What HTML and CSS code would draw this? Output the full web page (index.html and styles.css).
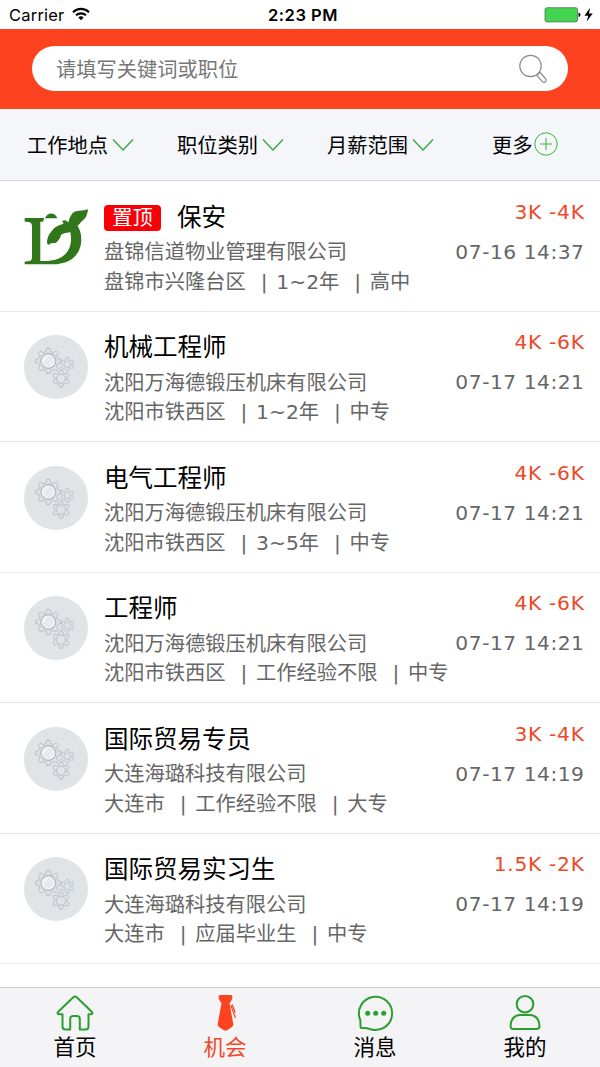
FILE: index.html
```html
<!DOCTYPE html>
<html lang="zh-CN">
<head>
<meta charset="utf-8">
<title>机会</title>
<link rel="stylesheet" href="styles.css">
</head>
<body>
<svg class="defs" aria-hidden="true">
  <symbol id="gears" viewBox="0 0 64 64">
    <g fill="none" stroke="#b4b9c0" stroke-width=".9" stroke-linejoin="round">
      <g transform="translate(24.300 26)">
        <path d="M-2.200-9.600-1.600-12.600H1.600L2.200-9.600 5.200-8.300 7.800-10 10-7.800 8.300-5.200 9.600-2.200 12.600-1.600V1.600L9.600 2.200 8.300 5.200 10 7.800 7.800 10 5.200 8.300 2.200 9.600 1.600 12.600H-1.600L-2.200 9.600-5.200 8.300-7.800 10-10 7.800-8.300 5.200-9.600 2.200-12.600 1.600V-1.600L-9.600-2.200-8.300-5.200-10-7.800-7.800-10-5.200-8.300z"/>
        <circle r="7.500" fill="#f0f2f3" stroke-width="1.300"/>
        <path d="M-5 2.500 2-5M-3.500 4.500 4.500-4M-.5 5.200 5.200-.8" stroke="#d0d4d8"/>
      </g>
      <g transform="translate(43.300 29.300) scale(.8)">
        <path d="M-1.900-6-1.300-8.600H1.300L1.900-6 4.250-4.650 6.800-5.400 8.100-3.200 6.150-1.350V1.350L8.100 3.200 6.800 5.400 4.250 4.650 1.900 6 1.300 8.600H-1.300L-1.900 6-4.250 4.650-6.800 5.400-8.100 3.200-6.150 1.350V-1.350L-8.100-3.200-6.800-5.400-4.250-4.650z"/>
        <circle r="4.200"/>
      </g>
      <g transform="translate(37 43.700)">
        <path d="M-1.900-6-1.300-8.600H1.300L1.900-6 4.250-4.650 6.800-5.400 8.100-3.200 6.150-1.350V1.350L8.100 3.200 6.800 5.400 4.250 4.650 1.900 6 1.300 8.600H-1.300L-1.900 6-4.250 4.650-6.800 5.400-8.100 3.200-6.150 1.350V-1.350L-8.100-3.200-6.800-5.400-4.250-4.650z"/>
        <circle r="4.600"/>
      </g>
    </g>
  </symbol>
  <symbol id="chevron" viewBox="0 0 22 14">
    <path d="m1 1.500 10 10.500L21 1.500" fill="none" stroke="#30a83c" stroke-width="1.300"/>
  </symbol>
</svg>

<div class="app">
  <div class="status">
    <div class="carrier">Carrier
      <svg class="wifi" viewBox="0 0 18 14"><g fill="none" stroke="#000" stroke-width="2.200"><path d="M1 5.200a11.500 11.500 0 0 1 16 0"/><path d="M4 8.300a7.200 7.200 0 0 1 10 0"/></g><path d="M6.300 10.500a3.900 3.900 0 0 1 5.400 0L9 13.300z"/></svg>
    </div>
    <div class="clock">2:23 PM</div>
    <div class="power">
      <svg viewBox="0 0 50 16"><rect x="1" y=".7" width="32.500" height="14.200" rx="2" fill="#43d551" stroke="#58705a" stroke-width=".8"/><path d="M34.500 5.500q2 .3 2 2.300t-2 2.300z"/><path d="M46 .8 40.500 8.700h3.700l-1.500 5.800 6-8H45z"/></svg>
    </div>
  </div>

  <header class="header">
    <div class="search">
      <span>请填写关键词或职位</span>
      <svg viewBox="0 0 30 30"><g fill="none" stroke="#8a8a8a" stroke-width="1.200"><circle cx="12.500" cy="12" r="10.700"/><path d="M18.800 21.300 22 18.300l5.800 6.700c1.500 1.800-1.500 4.500-3.300 2.900z"/></g></svg>
    </div>
  </header>

  <nav class="filters">
    <div class="filter">工作地点<svg class="chev"><use href="#chevron"/></svg></div>
    <div class="filter">职位类别<svg class="chev"><use href="#chevron"/></svg></div>
    <div class="filter">月薪范围<svg class="chev"><use href="#chevron"/></svg></div>
    <div class="filter more">更多<svg class="plus" viewBox="0 0 24 24"><path d="M12 6v12M6 12h12" stroke="#30b83c"/><circle cx="12" cy="12" r="11.200" fill="none" stroke="#30b83c"/></svg></div>
  </nav>

  <main class="jobs">
    <article class="job">
      <svg class="avatar logo" viewBox="0 0 64 64"><g fill="#32761c"><path d="M.7 13h19.600L19 16.800h-2.700V56h4C38 56 47 47.500 47 34c0-3-.3-5.500-1-7.500l6.300-7.200c3.400 4 5 9 5 15C57.300 50 46 59.300 29 59.300H.7V56.500C6 56.500 8 56 8 52V21.500c0-4-2-4.700-7.300-4.700z"/><path d="M21 13.300c2-6.500 10.500-6.500 12.300 0z"/><path d="M64 4.300c-.2 2.700-.8 5-2 7.400-1.200 2.300-3 3.500-5 5.300-1.800 2.300-3.500 4.300-6 5.700-1 2-2.300 3.500-4 4-3.500 1.400-7.500 1-10 3.300-.8 3-2.300 5.800-5 7.700-3 .8-5.500-.2-7.500 2.300L23 38.300c-.2-4.600 1.500-8.500 4-11.300 2-2.500 4-5.200 6.700-6 2-1.400 4.600-1.200 6-2.700L38 16.300c1-.7 2-1 3-1 1.500.3 2.400 1.200 3.300 2.400.6-2.200.8-4 2-6 1.600-2.800 3-4.900 5.700-5.400 4-1 8-.6 12-2z"/></g></svg>
      <div class="info">
        <div class="title"><span class="badge">置顶</span>保安</div>
        <div class="company">盘锦信道物业管理有限公司</div>
        <div class="tags"><span>盘锦市兴隆台区</span><span>1~2年</span><span>高中</span></div>
      </div>
      <div class="side"><div class="pay">3K -4K</div><div class="date">07-16 14:37</div></div>
    </article>
    <article class="job">
      <svg class="avatar"><use href="#gears"/></svg>
      <div class="info">
        <div class="title">机械工程师</div>
        <div class="company">沈阳万海德锻压机床有限公司</div>
        <div class="tags"><span>沈阳市铁西区</span><span>1~2年</span><span>中专</span></div>
      </div>
      <div class="side"><div class="pay">4K -6K</div><div class="date">07-17 14:21</div></div>
    </article>
    <article class="job">
      <svg class="avatar"><use href="#gears"/></svg>
      <div class="info">
        <div class="title">电气工程师</div>
        <div class="company">沈阳万海德锻压机床有限公司</div>
        <div class="tags"><span>沈阳市铁西区</span><span>3~5年</span><span>中专</span></div>
      </div>
      <div class="side"><div class="pay">4K -6K</div><div class="date">07-17 14:21</div></div>
    </article>
    <article class="job">
      <svg class="avatar"><use href="#gears"/></svg>
      <div class="info">
        <div class="title">工程师</div>
        <div class="company">沈阳万海德锻压机床有限公司</div>
        <div class="tags"><span>沈阳市铁西区</span><span>工作经验不限</span><span>中专</span></div>
      </div>
      <div class="side"><div class="pay">4K -6K</div><div class="date">07-17 14:21</div></div>
    </article>
    <article class="job">
      <svg class="avatar"><use href="#gears"/></svg>
      <div class="info">
        <div class="title">国际贸易专员</div>
        <div class="company">大连海璐科技有限公司</div>
        <div class="tags"><span>大连市</span><span>工作经验不限</span><span>大专</span></div>
      </div>
      <div class="side"><div class="pay">3K -4K</div><div class="date">07-17 14:19</div></div>
    </article>
    <article class="job">
      <svg class="avatar"><use href="#gears"/></svg>
      <div class="info">
        <div class="title">国际贸易实习生</div>
        <div class="company">大连海璐科技有限公司</div>
        <div class="tags"><span>大连市</span><span>应届毕业生</span><span>中专</span></div>
      </div>
      <div class="side"><div class="pay">1.5K -2K</div><div class="date">07-17 14:19</div></div>
    </article>
  </main>

  <footer class="tabs">
    <div class="tab">
      <svg viewBox="0 0 38 38"><path d="M17.300 3.200q1.700-1.400 3.400 0L35.500 17.500c1.800 1.900.8 2.800-1 2.800h-2v12.200q0 3-3 3h-5.700V25q0-3-3-3h-3.600q-3 0-3 3v10.500H9.500q-3 0-3-3V20.300h-3c-1.800 0-2.800-.9-1-2.800z"/></svg>
      首页
    </div>
    <div class="tab active">
      <svg viewBox="0 0 38 38"><path class="solid" d="M12.500 2.500q0-1.500 1.800-1.500h10.400q1.800 0 1.800 1.500-.2 4-2.700 6.300-.5 1 0 2L27.300 30q.3 2-1.300 3l-5 3.300q-1.500.9-3 0L13 33q-1.600-1-1.300-3l3.500-19.200q.5-1 0-2-2.500-2.300-2.700-6.300z"/><path class="thin" d="m24.700 11 4.800 12.800M26.200 10.500l3 8"/></svg>
      机会
    </div>
    <div class="tab">
      <svg viewBox="0 0 38 38"><path d="M4.300 26A16.600 16.600 0 1 1 14.500 35.200Q10 33.500 6 34q-1.500 0-1.500-1.800z"/><g class="solid"><circle cx="11.700" cy="19.200" r="2.500"/><circle cx="19.700" cy="19.200" r="2.500"/><circle cx="27.700" cy="19.200" r="2.500"/></g></svg>
      消息
    </div>
    <div class="tab">
      <svg viewBox="0 0 38 38"><circle cx="19" cy="10.200" r="8.300"/><path d="M14 21h10c6 0 9.500 5 9.500 11q0 3-3 3h-23q-3 0-3-3C4.500 26 8 21 14 21z"/></svg>
      我的
    </div>
  </footer>
</div>
</body>
</html>
```
FILE: styles.css
```css
* { box-sizing: border-box; }
body {
  margin: 0;
  font-family: "DejaVu Sans", "Noto Sans CJK SC", sans-serif;
  font-size: 20.25px;
  color: #000;
  background: #fff;
}
.defs { display: none; }
.app {
  width: 600px;
  height: 1067px;
  display: flex;
  flex-direction: column;
  overflow: hidden;
}

.status {
  height: 29px;
  flex: none;
  display: grid;
  grid-template-columns: 1fr auto 1fr;
  align-items: center;
  padding: 2px 6px 0 9px;
  font: 16.5px/27px Inter, sans-serif;
}
.carrier { display: flex; align-items: center; gap: 8px; letter-spacing: .2px; }
.wifi { width: 18px; height: 14px; margin-top: -3px; }
.clock { font-weight: 600; letter-spacing: .5px; padding-left: 3px; }
.power { display: flex; justify-content: flex-end; }
.power svg { width: 50px; height: 16px; margin-top: -2px; }

.header { height: 80px; flex: none; padding: 17px 32px; background: #fc421f; }
.search {
  height: 45px;
  border-radius: 23px;
  background: #fff;
  color: #777;
  display: flex;
  align-items: center;
  justify-content: space-between;
  padding: 0 20px 0 24px;
}
.search svg { width: 30px; height: 30px; }

.filters {
  height: 72px;
  flex: none;
  display: grid;
  grid-template-columns: repeat(4, 150px);
  background: #f5f6fa;
  border-bottom: 1px solid #d9d9dc;
}
.filter { display: flex; align-items: center; padding-left: 27px; }
.filter.more { padding-left: 42px; }
.chev { width: 22px; height: 14px; margin-left: 4px; }
.plus { width: 24px; height: 24px; margin: -2px 0 0 1px; }

.jobs { flex: 1; min-height: 0; overflow: hidden; padding-top: .4px; }
.job {
  height: 130.5px;
  display: flex;
  padding: 18.500px 16px 0 24px;
  border-bottom: 1px solid #e7e7e7;
  color: #666;
}
.avatar { width: 64px; height: 64px; margin: 5px 16px 0 0; border-radius: 50%; background: #e0e4e6; flex: none; }
.avatar.logo { background: none; border-radius: 0; }
.info { flex: 1; white-space: nowrap; }
.title { height: 38.500px; padding-bottom: 3px; display: flex; align-items: center; font-size: 24.5px; line-height: 32px; color: #000; }
.badge {
  width: 57px;
  height: 26px;
  margin-right: 16px;
  border-radius: 4px;
  background: #f80008;
  color: #fff;
  font-size: 20.25px;
  line-height: 26px;
  text-align: center;
}
.company, .tags { height: 29.3px; line-height: 29.3px; }
.tags { display: flex; }
.tags span + span::before { content: "|"; margin: 0 8.700px 0 15px; }
.side { text-align: right; white-space: nowrap; }
.pay { height: 24px; line-height: 24px; color: #ee4827; letter-spacing: .7px; margin-right: -.7px; }
.date { margin-top: 16px; height: 24px; line-height: 24px; letter-spacing: .5px; margin-right: -.5px; }

.tabs {
  height: 80px;
  flex: none;
  display: grid;
  grid-template-columns: repeat(4, 1fr);
  background: #f4f4f6;
  border-top: 1px solid #ccc;
}
.tab { display: flex; flex-direction: column; align-items: center; padding-top: 6px; font-size: 21.5px; line-height: 31px; }
.tab svg { width: 38px; height: 38px; fill: none; stroke: #2b9e30; stroke-width: 2; stroke-linejoin: round; }
.tab .solid { fill: #2b9e30; stroke: none; }
.tab.active { color: #ee4827; }
.tab.active .solid { fill: #fc421f; }
.tab .thin { stroke: #fc421f; stroke-width: 1.2; }
```
